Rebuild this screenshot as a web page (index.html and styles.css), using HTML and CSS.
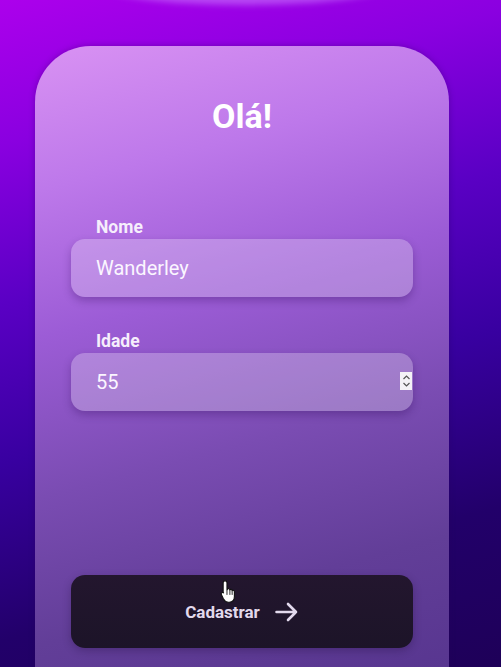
FILE: index.html
```html
<!DOCTYPE html>
<html lang="pt-BR">
<head>
<meta charset="utf-8">
<title>Olá!</title>
<link rel="stylesheet" href="styles.css">
</head>
<body>
<div class="glow"></div>
<main class="card">
  <h1 class="title">Olá!</h1>
  <form class="form">
    <label class="field">
      <span class="label">Nome</span>
      <span class="input">Wanderley</span>
    </label>
    <label class="field field-age">
      <span class="label">Idade</span>
      <span class="input input-number">55
        <span class="spinner">
          <svg width="11" height="16" viewBox="0 0 11 16"><path d="M2.5 6 L5.5 3 L8.5 6 M2.5 10 L5.5 13 L8.5 10" fill="none" stroke="#555" stroke-width="1.2"/></svg>
        </span>
      </span>
    </label>
    <button type="button" class="submit">
      <span>Cadastrar</span>
      <svg class="arrow" width="24" height="20" viewBox="0 0 24 20"><path d="M1.5 10 H21 M13 2 L21 10 L13 18" fill="none" stroke="#e2d9ec" stroke-width="2.6" stroke-linecap="round" stroke-linejoin="round"/></svg>
      <svg class="cursor" width="18" height="25" viewBox="0 0 16 22"><path d="M4.5 1.5 C5.6 1.5 6.2 2.2 6.2 3.2 V10 L6.8 8.6 C7.6 8.2 8.6 8.5 8.8 9.4 C9.6 8.9 10.6 9.2 10.8 10.1 C11.6 9.7 12.6 10 12.8 11 V15.5 C12.8 18.5 11 20.5 8.2 20.5 H7.4 C5.2 20.5 4 19.3 3 17.4 L1.2 13.7 C0.8 12.9 1.2 12 2 11.9 C2.6 11.8 3 12.1 3.3 12.6 L2.8 11.6 V3.2 C2.8 2.2 3.4 1.5 4.5 1.5 Z" fill="#fff" stroke="#111" stroke-width="1"/><path d="M6.2 10 V14 M8.8 9.4 V14 M10.8 10.1 V14" stroke="#111" stroke-width="0.8"/></svg>
    </button>
  </form>
</main>
</body>
</html>
```
FILE: styles.css
```css
* { box-sizing: border-box; }
html, body { margin: 0; padding: 0; }
body {
  width: 501px;
  height: 667px;
  overflow: hidden;
  position: relative;
  font-family: Roboto, "Liberation Sans", sans-serif;
  background: linear-gradient(165deg, #ac00ec 0%, #8a00e0 18%, #5a00c4 38%, #3800a0 58%, #22006a 80%, #1e0058 100%);
  padding-top: 46px;
}
.glow {
  position: absolute;
  left: 95px;
  top: -40px;
  width: 300px;
  height: 45px;
  border-radius: 50%;
  background: rgba(205, 130, 255, 0.55);
  filter: blur(3px);
}
.card {
  margin-left: 35px;
  width: 414px;
  height: 621px;
  border-radius: 56px 56px 0 0;
  padding: 50px 36px 0;
  background: linear-gradient(165deg, #d992f3 0%, #bd78ea 20%, #9c5cd6 40%, #7a4cb2 62%, #623e98 82%, #583690 100%);
  box-shadow: 0 0 6px rgba(40, 0, 90, 0.35);
}
.title {
  margin: 0;
  text-align: center;
  color: #fff;
  font-size: 34px;
  line-height: 40px;
  font-weight: 700;
}
.form {
  display: flex;
  flex-direction: column;
  margin-top: 81px;
}
.field {
  display: flex;
  flex-direction: column;
}
.field-age { margin-top: 34px; }
.label {
  color: #f6eefc;
  font-size: 17.5px;
  line-height: 20px;
  font-weight: 700;
  padding-left: 25px;
  margin-bottom: 2px;
}
.input {
  position: relative;
  display: flex;
  align-items: center;
  height: 58px;
  padding-left: 25px;
  border-radius: 14px;
  background: rgba(255, 255, 255, 0.26);
  box-shadow: 0 4px 8px rgba(40, 0, 80, 0.28);
  color: #fbf6ff;
  font-size: 20px;
}
.spinner {
  position: absolute;
  right: 1px;
  top: 19px;
  width: 12px;
  height: 18px;
  background: #f4f2f6;
  display: flex;
  align-items: center;
  justify-content: center;
}
.submit {
  position: relative;
  margin-top: 164px;
  height: 73px;
  border: none;
  border-radius: 14px;
  background: linear-gradient(180deg, #23162e 0%, #1c1428 100%);
  color: #e2d9ec;
  font-family: Roboto, "Liberation Sans", sans-serif;
  font-size: 17px;
  font-weight: 700;
  display: flex;
  align-items: center;
  justify-content: center;
  gap: 15px;
  padding: 1px 0 0 0;
  box-shadow: 0 3px 8px rgba(20, 0, 40, 0.25);
}
.arrow { display: block; }
.cursor {
  position: absolute;
  left: 149px;
  top: 4px;
}
```
